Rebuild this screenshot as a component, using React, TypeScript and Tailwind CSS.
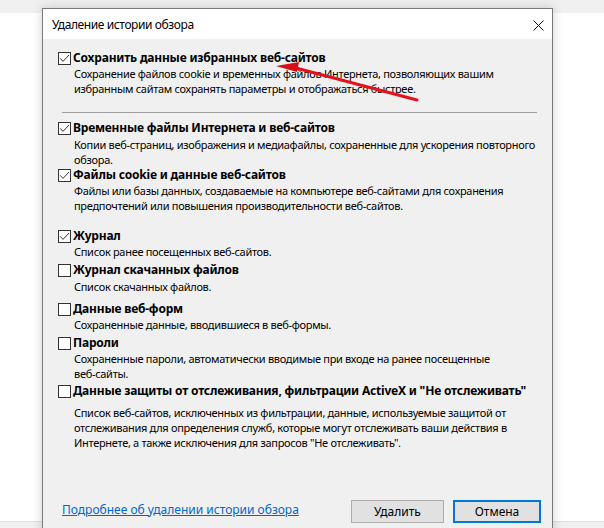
import React from "react";

function Check({ checked }: { checked: boolean }) {
  return (
    <span className="w-[13px] h-[13px] border border-[#333333] bg-white flex items-center justify-center shrink-0">
      {checked && (
        <svg width="11" height="11" viewBox="0 0 11 11">
          <path d="M1.2 5.4 L4 8.4 L10 2" stroke="#333" strokeWidth="1" fill="none" />
        </svg>
      )}
    </span>
  );
}

function Label({ checked, text, cls }: { checked: boolean; text: string; cls: string }) {
  return (
    <div className={`flex items-center h-[16px] gap-[2px] ${cls}`}>
      <Check checked={checked} />
      <span className="font-bold whitespace-nowrap leading-[16px] tracking-[-0.2px]">{text}</span>
    </div>
  );
}

function Desc({ lines, cls }: { lines: string[]; cls: string }) {
  return (
    <div className={`pl-[16px] leading-[15px] text-[11px] tracking-[-0.3px] ${cls}`}>
      {lines.map((l, i) => (
        <div key={i} className="whitespace-nowrap h-[15px]">
          {l}
        </div>
      ))}
    </div>
  );
}

export default function App() {
  return (
    <div className="relative w-[604px] h-[528px] bg-white overflow-hidden font-['Noto_Sans',sans-serif] text-[12px] text-black">
      <div className="absolute left-0 top-0 w-full h-[13px] bg-[#f0f0f0]" />
      <div className="absolute left-0 top-[521px] w-full h-[7px] bg-[#f0f0f0] border-t border-[#e0e0e0]" />
      <div className="absolute left-[42px] top-[8px] w-[511px] h-[560px] border border-[#7a7a7a] bg-[#f0f0f0] shadow-[0_0_10px_rgba(0,0,0,0.18)] flex flex-col">
        <div className="h-[30px] bg-white flex items-center justify-between pl-[9px] pr-[8px] pt-[2px] shrink-0">
          <span className="leading-[16px] tracking-[-0.4px]">Удаление истории обзора</span>
          <svg width="11" height="11" viewBox="0 0 11 11">
            <path d="M0.5 0.5 L10.5 10.5 M10.5 0.5 L0.5 10.5" stroke="#111" strokeWidth="1" />
          </svg>
        </div>
        <div className="flex flex-col pl-[15px] pr-[15px] pt-[11px]">
          <Label checked text="Сохранить данные избранных веб-сайтов" cls="" />
          <Desc
            cls=""
            lines={[
              "Сохранение файлов cookie и временных файлов Интернета, позволяющих вашим",
              "избранным сайтам сохранять параметры и отображаться быстрее.",
            ]}
          />
          <div className="mt-[16px] ml-[4px] h-[1px] bg-[#a0a0a0]" />
          <Label checked text="Временные файлы Интернета и веб-сайтов" cls="mt-[7px]" />
          <Desc
            cls="mt-[1px]"
            lines={[
              "Копии веб-страниц, изображения и медиафайлы, сохраненные для ускорения повторного",
              "обзора.",
            ]}
          />
          <Label checked text="Файлы cookie и данные веб-сайтов" cls="" />
          <Desc
            cls=""
            lines={[
              "Файлы или базы данных, создаваемые на компьютере веб-сайтами для сохранения",
              "предпочтений или повышения производительности веб-сайтов.",
            ]}
          />
          <Label checked text="Журнал" cls="mt-[15px]" />
          <Desc cls="" lines={["Список ранее посещенных веб-сайтов."]} />
          <Label checked={false} text="Журнал скачанных файлов" cls="mt-[3px]" />
          <Desc cls="mt-[1px]" lines={["Список скачанных файлов."]} />
          <Label checked={false} text="Данные веб-форм" cls="mt-[7px]" />
          <Desc cls="" lines={["Сохраненные данные, вводившиеся в веб-формы."]} />
          <Label checked={false} text="Пароли" cls="mt-[3px]" />
          <Desc
            cls=""
            lines={[
              "Сохраненные пароли, автоматически вводимые при входе на ранее посещенные",
              "веб-сайты.",
            ]}
          />
          <Label
            checked={false}
            text={'Данные защиты от отслеживания, фильтрации ActiveX и "Не отслеживать"'}
            cls="mt-[2px]"
          />
          <Desc
            cls="mt-[6px]"
            lines={[
              "Список веб-сайтов, исключенных из фильтрации, данные, используемые защитой от",
              "отслеживания для определения служб, которые могут отслеживать ваши действия в",
              'Интернете, а также исключения для запросов "Не отслеживать".',
            ]}
          />
        </div>
        <div className="mt-[50px] flex items-center justify-between pl-[19px] pr-[11px]">
          <span className="text-[#0066cc] underline leading-[16px] -mt-[4px]">Подробнее об удалении истории обзора</span>
          <div className="flex gap-[9px]">
            <div className="w-[93px] h-[23px] bg-[#e1e1e1] border border-[#adadad] flex items-center justify-center">
              Удалить
            </div>
            <div className="w-[88px] h-[23px] bg-[#e1e1e1] border-2 border-[#0078d7] flex items-center justify-center">
              Отмена
            </div>
          </div>
        </div>
      </div>
      <svg className="absolute left-0 top-0 pointer-events-none" width="604" height="528">
        <line x1="296" y1="68" x2="417" y2="100" stroke="#e5121b" strokeWidth="3" strokeLinecap="round" />
        <polygon points="276,66 299,62 297,72" fill="#d80f18" />
      </svg>
    </div>
  );
}
